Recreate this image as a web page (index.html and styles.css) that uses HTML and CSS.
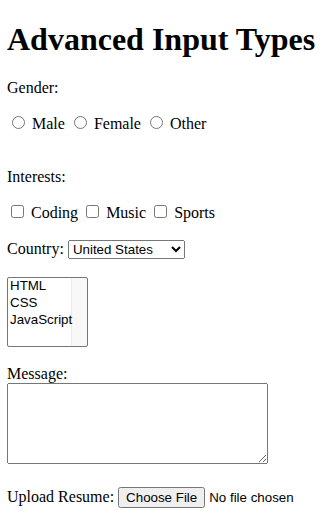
FILE: index.html
```html
<!DOCTYPE html>
<html>
<head>
<meta charset="utf-8">
<title>Advanced Input Types</title>
<link rel="stylesheet" href="styles.css">
</head>
<body>
<h1 class="title">Advanced Input Types</h1>
<form class="form">
  <p class="field">Gender:</p>
  <p class="field options options-gender">
    <input type="radio" name="gender" id="male"> <label for="male">Male</label>
    <input type="radio" name="gender" id="female"> <label for="female">Female</label>
    <input type="radio" name="gender" id="other"> <label for="other">Other</label>
  </p>
  <p class="field">Interests:</p>
  <p class="field options options-interests">
    <input type="checkbox" id="coding"> <label for="coding">Coding</label>
    <input type="checkbox" id="music"> <label for="music">Music</label>
    <input type="checkbox" id="sports"> <label for="sports">Sports</label>
  </p>
  <p class="field field-country">
    <label for="country">Country:</label>
    <select id="country" class="country">
      <option>United States</option>
      <option>Canada</option>
      <option>United Kingdom</option>
    </select>
  </p>
  <select multiple size="4" class="skills">
    <option>HTML</option>
    <option>CSS</option>
    <option>JavaScript</option>
  </select>
  <p class="field field-message">
    <label for="msg">Message:</label><br>
    <textarea id="msg" class="message" rows="5" cols="30"></textarea>
  </p>
  <p class="field field-upload">
    <label for="resume">Upload Resume:</label>
    <input type="file" id="resume" class="file">
  </p>
</form>
</body>
</html>
```
FILE: styles.css
```css
body {
  margin: 7px 7px 8px 7px;
  font-family: "Liberation Serif", "Times New Roman", serif;
  font-size: 16px;
  color: #000;
  background: #fff;
}
select, input, textarea, button {
  font-family: "Liberation Sans", Arial, sans-serif;
}
.title {
  margin: 14px 0 21px;
  font-size: 32px;
}
.field {
  margin: 16px 0;
}
.options-gender {
  margin-bottom: 35px;
}
.options-interests {
  margin-top: 13px;
  margin-bottom: 18px;
}
.field-country {
  margin-bottom: 18px;
}
.skills {
  display: block;
  box-sizing: border-box;
  width: 81px;
  height: 70px;
  margin: 0;
  border: 1px solid #767676;
  border-radius: 2px;
  font-size: 13.33px;
  background: linear-gradient(to left, #f8f8f8 15px, #ececec 15px, #ececec 16px, #fff 16px);
}
.field-message {
  margin-top: 18px;
  margin-bottom: 19px;
}
.message {
  box-sizing: border-box;
  width: 261px;
  height: 81px;
  margin: 0;
}
.file {
  width: 178px;
}
```
